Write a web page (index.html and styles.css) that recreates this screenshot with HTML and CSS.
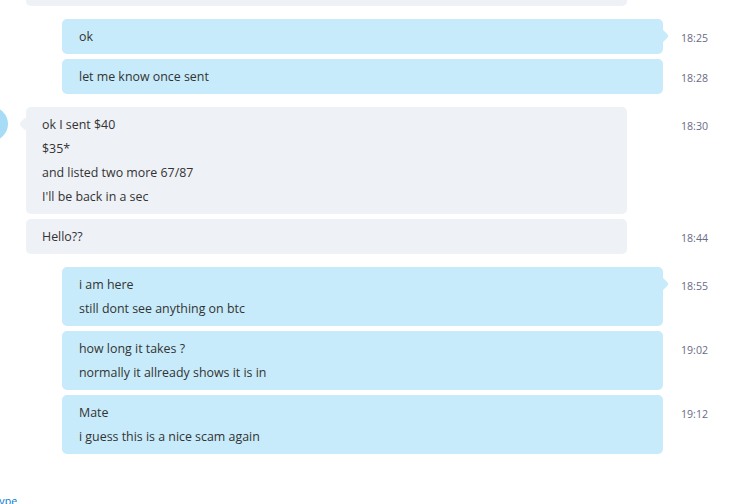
FILE: index.html
```html
<!DOCTYPE html>
<html>
<head>
<meta charset="utf-8">
<link rel="stylesheet" href="styles.css">
</head>
<body>
<div class="chat">
  <div class="row in">
    <div class="bubble stub"></div>
  </div>

  <div class="row out group">
    <div class="bubble tail"><p>ok</p></div>
    <div class="time">18:25</div>
  </div>
  <div class="row out">
    <div class="bubble"><p>let me know once sent</p></div>
    <div class="time">18:28</div>
  </div>

  <div class="row in group">
    <div class="avatar"></div>
    <div class="bubble tail"><p>ok I sent $40</p><p>$35*</p><p>and listed two more 67/87</p><p>I'll be back in a sec</p></div>
    <div class="time">18:30</div>
  </div>
  <div class="row in">
    <div class="bubble"><p>Hello??</p></div>
    <div class="time">18:44</div>
  </div>

  <div class="row out group">
    <div class="bubble tail"><p>i am here</p><p>still dont see anything on btc</p></div>
    <div class="time">18:55</div>
  </div>
  <div class="row out">
    <div class="bubble"><p>how long it takes ?</p><p>normally it allready shows it is in</p></div>
    <div class="time">19:02</div>
  </div>
  <div class="row out">
    <div class="bubble"><p>Mate</p><p>i guess this is a nice scam again</p></div>
    <div class="time">19:12</div>
  </div>
</div>
<div class="footer"><a class="brand">Skype</a></div>
</body>
</html>
```
FILE: styles.css
```css
html, body {
  margin: 0;
  padding: 0;
  background: #ffffff;
  overflow: hidden;
  height: 504px;
}
body {
  font-family: "Open Sans", "Noto Sans", sans-serif;
  font-size: 12.4px;
  color: #333333;
}
.chat {
  display: flex;
  flex-direction: column;
  gap: 5px;
}
.row {
  display: grid;
  grid-template-columns: 663px 1fr;
  position: relative;
}
.row.group {
  margin-top: 8px;
}
.bubble {
  width: 601px;
  box-sizing: border-box;
  border-radius: 5px;
  padding: 6px 16px 5px;
  position: relative;
}
.bubble p {
  margin: 0;
  line-height: 24px;
}
.out .bubble {
  background: #c7ebfa;
  justify-self: end;
  padding-left: 17px;
}
.in .bubble {
  background: #eef1f6;
  margin-left: 26px;
}
.bubble.stub {
  height: 6px;
  padding: 0;
  border-radius: 0 0 5px 5px;
}
.out .bubble.tail::after {
  content: "";
  position: absolute;
  right: -4px;
  top: 12px;
  width: 10px;
  height: 10px;
  background: #c7ebfa;
  transform: rotate(45deg);
  border-radius: 2px;
}
.in .bubble.tail::before {
  content: "";
  position: absolute;
  left: -5px;
  top: 12px;
  width: 10px;
  height: 10px;
  background: #eef1f6;
  transform: rotate(45deg);
  border-radius: 2px;
}
.time {
  padding-left: 18px;
  padding-top: 12px;
  font-size: 10.6px;
  line-height: 14px;
  color: #6a6a85;
}
.avatar {
  position: absolute;
  left: -26px;
  top: 0;
  width: 34px;
  height: 34px;
  border-radius: 50%;
  background: #a6dcf5;
}
.footer {
  position: absolute;
  left: -12px;
  top: 494px;
  font-size: 10.6px;
  line-height: 14px;
}
.brand {
  color: #0078d4;
}
```
